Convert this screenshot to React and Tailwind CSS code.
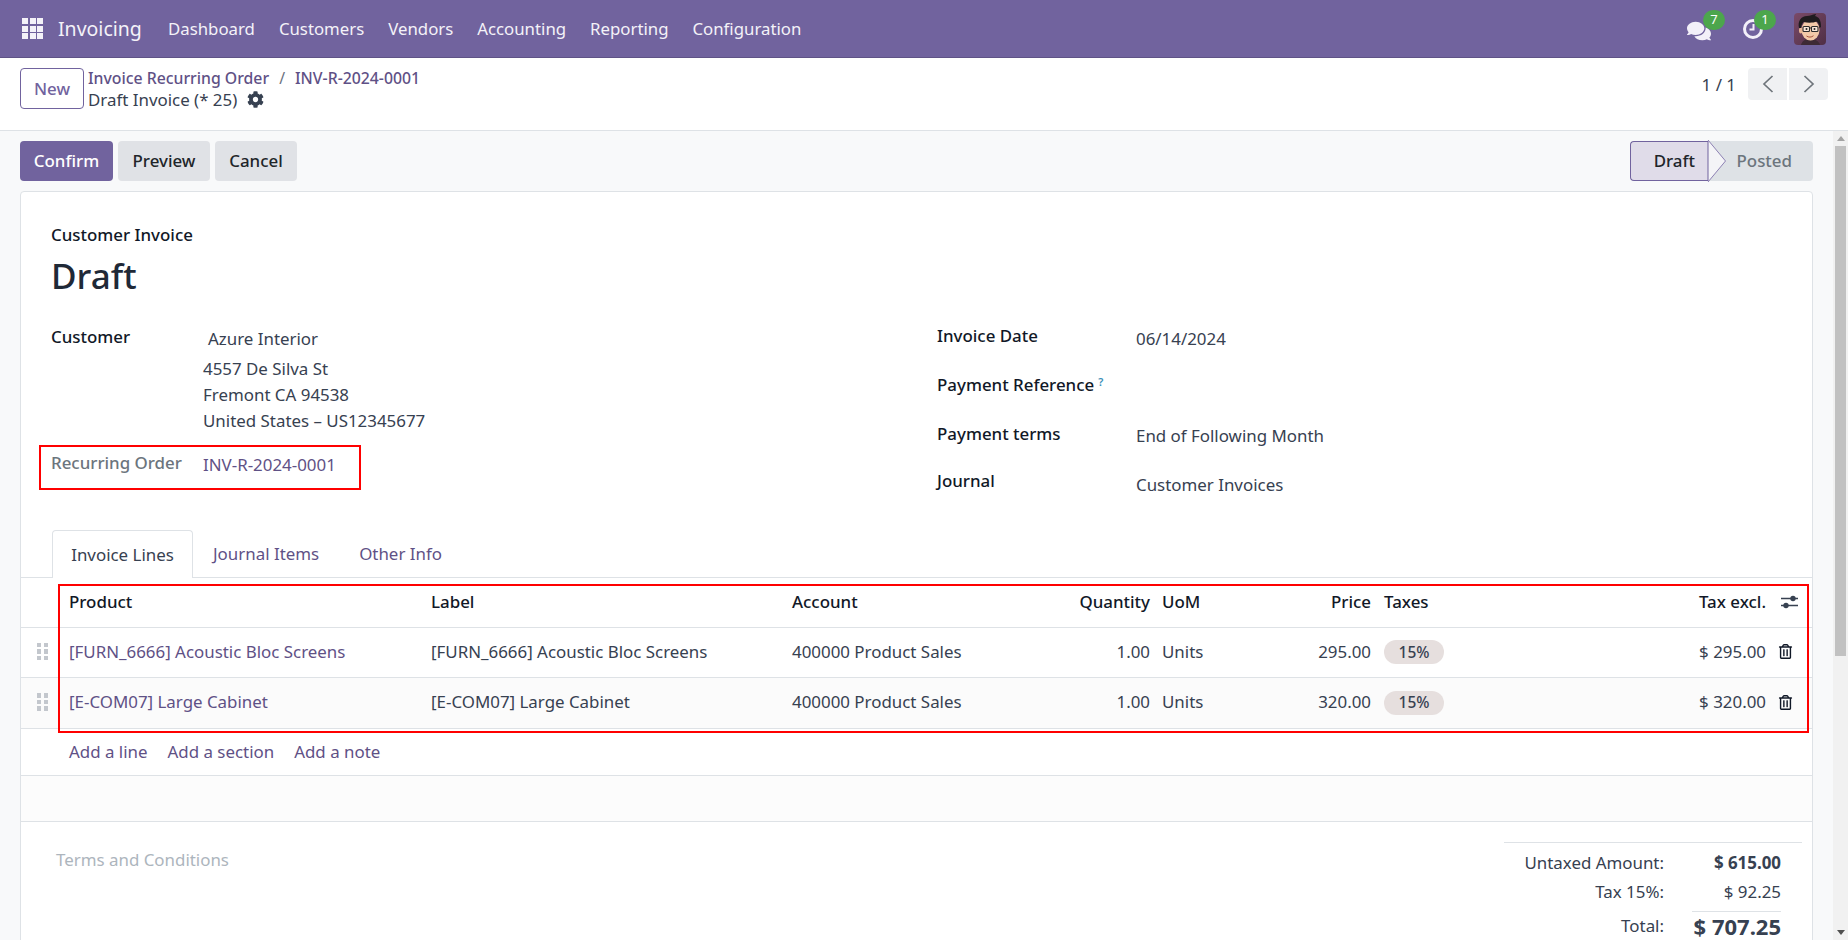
import { FaComments, FaCog, FaRegTrashAlt } from 'react-icons/fa';

const NAV = ['Dashboard', 'Customers', 'Vendors', 'Accounting', 'Reporting', 'Configuration'];

const LINES = [
  { product: '[FURN_6666] Acoustic Bloc Screens', price: '295.00', total: '$ 295.00', bg: 'bg-white', h: 'h-[50px]' },
  { product: '[E-COM07] Large Cabinet', price: '320.00', total: '$ 320.00', bg: 'bg-[#fbfbfb]', h: 'h-[51px]' },
];

const COLS = 'grid grid-cols-[37px_362px_361px_240px_129px_120px_101px_179px_216px_46px] items-center';

function AppGrid() {
  return (
    <div className="grid grid-cols-3 gap-[1.5px] w-[21px] h-[21px]">
      {Array.from({ length: 9 }).map((_, i) => (
        <span key={i} className="bg-[#f4f2f8]" />
      ))}
    </div>
  );
}

function ClockIcon() {
  return (
    <svg width="22" height="22" viewBox="0 0 22 22" fill="none" stroke="#f3f0f9">
      <circle cx="11" cy="11" r="8.5" strokeWidth="3" />
      <path d="M11.5 6v5.5H7.5" strokeWidth="2" />
    </svg>
  );
}

function Avatar() {
  return (
    <svg width="32" height="32" viewBox="0 0 32 32" className="rounded-[4px]">
      <defs>
        <linearGradient id="av" x1="0" y1="0" x2="1" y2="1">
          <stop offset="0" stopColor="#7a4a68" />
          <stop offset="1" stopColor="#4f2f45" />
        </linearGradient>
      </defs>
      <rect width="32" height="32" fill="url(#av)" />
      <path d="M7 32c1-4 4-6 9-6s9 2 10 6z" fill="#3d2a35" />
      <ellipse cx="16.5" cy="17" rx="9" ry="10.5" fill="#f3c9a8" />
      <ellipse cx="6.8" cy="17.5" rx="1.8" ry="3" fill="#eab694" />
      <path d="M5 15C3.500 8 7 3 13 3c3 0 5-1.500 9-2 0 1-1 1.500-1 2 4 1 6 4 6 11l-1.500 1c0-3-1-5.500-3-6.500-3 1.500-9 1.500-13 .5-1.500 2-2.500 4-2.500 6z" fill="#1f1c1f" />
      <rect x="9" y="13.500" width="6.500" height="5" rx="1" fill="#fff" fillOpacity=".55" stroke="#2b2b2b" strokeWidth="1.100" />
      <rect x="17.500" y="13.500" width="6.500" height="5" rx="1" fill="#fff" fillOpacity=".55" stroke="#2b2b2b" strokeWidth="1.100" />
      <path d="M15.500 15h2" stroke="#2b2b2b" strokeWidth="1" />
      <circle cx="12.500" cy="16" r="1" fill="#222" />
      <circle cx="20.500" cy="16" r="1" fill="#222" />
      <path d="M12.500 23c2 1.500 5 1.500 7-.3" stroke="#a8563f" strokeWidth="1" fill="none" />
    </svg>
  );
}

function SliderIcon() {
  return (
    <svg width="19" height="16" viewBox="0 0 19 16" fill="none">
      <path d="M1 4.500h17M1 11.500h17" stroke="#374151" strokeWidth="1.300" />
      <circle cx="13" cy="4.500" r="2.700" fill="#374151" />
      <circle cx="6" cy="11.500" r="2.700" fill="#374151" />
    </svg>
  );
}

function DragHandle() {
  return (
    <div className="grid grid-cols-2 gap-x-[3px] gap-y-[2px] w-[11px] ml-[16px]">
      {Array.from({ length: 6 }).map((_, i) => (
        <span key={i} className="w-[4px] h-[4.500px] bg-[#c3c7cd]" />
      ))}
    </div>
  );
}

function Chevron({ dir }) {
  return (
    <svg width="12" height="20" viewBox="0 0 12 20" fill="none" stroke="#6f757b" strokeWidth="1.700">
      <path d={dir === 'left' ? 'M10.500 2 2 10l8.500 8' : 'M1.500 2 10 10l-8.500 8'} />
    </svg>
  );
}

export default function App() {
  return (
    <div className="h-screen w-full overflow-hidden flex flex-col bg-white text-[16.9px] text-[#374151] font-['Noto_Sans',sans-serif]">
      <header className="h-[58px] shrink-0 bg-[#71639e] border-b border-[#5f5386] flex items-center text-[#f4f2f8]">
        <div className="pl-[22px] pr-[15px]">
          <AppGrid />
        </div>
        <span className="text-[19.5px] w-[110px]">Invoicing</span>
        <nav className="flex gap-[24px] text-[16.8px]">
          {NAV.map((n) => (
            <span key={n}>{n}</span>
          ))}
        </nav>
        <div className="ml-auto flex items-center">
          <div className="relative w-[38px] h-[32px] flex items-center">
            <FaComments size={24} className="text-[#f3f0f9] mt-[5px]" />
            <span className="absolute left-[16px] top-[-3px] w-[22px] h-[20px] rounded-full bg-[#4ca64c] text-white text-[13px] flex items-center justify-center">7</span>
          </div>
          <div className="relative w-[34px] h-[32px] ml-[17px] flex items-center">
            <ClockIcon />
            <span className="absolute left-[12px] top-[-3px] w-[22px] h-[20px] rounded-full bg-[#4ca64c] text-white text-[13px] flex items-center justify-center">1</span>
          </div>
          <div className="ml-[18px] mr-[22px] h-[32px]">
            <Avatar />
          </div>
        </div>
      </header>

      <div className="h-[73px] shrink-0 border-b border-[#dee2e6] flex pt-[10px] pl-[20px] pr-[20px]">
        <button className="w-[64px] h-[41px] rounded-[4px] border border-[#71639e] text-[#71639e] font-medium bg-white">New</button>
        <div className="ml-[4px] leading-[21px]">
          <div className="text-[#5f5186] text-[15.8px] font-medium flex items-center">
            <span>Invoice Recurring Order</span>
            <span className="mx-[10px] text-[#6b7280] font-normal">/</span>
            <span>INV-R-2024-0001</span>
          </div>
          <div className="flex items-center gap-[10px]">
            <span>Draft Invoice (* 25)</span>
            <FaCog size={17} className="text-[#374151]" />
          </div>
        </div>
        <div className="ml-auto flex items-start">
          <span className="mr-[12px] mt-[4px]">1 / 1</span>
          <button className="w-[39px] h-[32px] bg-[#f0f1f3] rounded-l-[4px] flex items-center justify-center">
            <Chevron dir="left" />
          </button>
          <button className="w-[39px] h-[32px] ml-[2px] bg-[#f0f1f3] rounded-r-[4px] flex items-center justify-center">
            <Chevron dir="right" />
          </button>
        </div>
      </div>

      <div className="flex-1 min-h-0 flex bg-[#f8f9fa]">
        <main className="flex-1 min-w-0 pl-[20px] pr-[20px] pt-[10px] overflow-hidden">
          <div className="flex items-center h-[40px]">
            <button className="w-[93px] h-[40px] rounded-[4px] bg-[#71639e] text-white font-medium">Confirm</button>
            <button className="w-[92px] h-[40px] ml-[5px] rounded-[4px] bg-[#e0e2e6] text-[#212529] font-medium">Preview</button>
            <button className="w-[82px] h-[40px] ml-[5px] rounded-[4px] bg-[#e0e2e6] text-[#212529] font-medium">Cancel</button>
            <div className="ml-auto relative flex h-[40px] font-medium">
              <div className="w-[78px] rounded-l-[4px] border border-[#71639e] border-r-0 bg-[#e0dce9] text-[#212529] flex items-center justify-end pr-[13px]">Draft</div>
              <div className="w-[105px] rounded-r-[4px] bg-[#dee2e6] text-[#6c757d] flex items-center justify-end pr-[21px]">Posted</div>
              <svg className="absolute left-[77px] top-[-1px]" width="20" height="42" viewBox="0 0 20 42" fill="none">
                <path d="M1 0 18.500 21 1 42z" fill="#f4f4f7" />
                <path d="M1 0 18.500 21 1 42" stroke="#8d80b3" strokeWidth="1" />
                <path d="M1 1v40" stroke="#71639e" strokeWidth="1" />
              </svg>
            </div>
          </div>

          <section className="mt-[10px] bg-white border border-[#dee2e6] rounded-t-[4px] h-[760px]">
            <div className="pl-[30px] pr-[31px] pt-[31px]">
              <div className="leading-[24px] font-medium text-[#111827]">Customer Invoice</div>
              <div className="mt-[4px] leading-[50px] text-[35px] font-medium text-[#1f2937]">Draft</div>

              <div className="mt-[23px] h-[206px] flex">
                <div className="w-[886px] pt-[1px]">
                  <div className="flex">
                    <div className="w-[152px] leading-[24px] font-medium text-[#111827]">Customer</div>
                    <div className="mt-[2px] pl-[5px] leading-[24px]">Azure Interior</div>
                  </div>
                  <div className="ml-[152px] mt-[5px] leading-[26px]">
                    <div>4557 De Silva St</div>
                    <div>Fremont CA 94538</div>
                    <div>United States – US12345677</div>
                  </div>
                  <div className="relative flex mt-[17px]">
                    <div className="w-[152px] leading-[24px] font-medium text-[#6c757d]">Recurring Order</div>
                    <div className="mt-[2px] leading-[24px] text-[#5f5186]">INV-R-2024-0001</div>
                    <div className="absolute left-[-12px] top-[-6px] w-[322px] h-[45px] border-2 border-[#ff0000] pointer-events-none" />
                  </div>
                </div>
                <div className="flex-1">
                  <div className="flex h-[49px]">
                    <div className="w-[199px] leading-[24px] font-medium text-[#111827]">Invoice Date</div>
                    <div className="mt-[3px] leading-[24px]">06/14/2024</div>
                  </div>
                  <div className="flex h-[49px]">
                    <div className="w-[199px] leading-[24px] font-medium text-[#111827] whitespace-nowrap">
                      Payment Reference
                      <sup className="ml-[4px] text-[11px] text-[#3b8fb8] font-semibold">?</sup>
                    </div>
                  </div>
                  <div className="flex h-[47px]">
                    <div className="w-[199px] leading-[24px] font-medium text-[#111827]">Payment terms</div>
                    <div className="mt-[2px] leading-[24px]">End of Following Month</div>
                  </div>
                  <div className="flex">
                    <div className="w-[199px] leading-[24px] font-medium text-[#111827]">Journal</div>
                    <div className="mt-[4px] leading-[24px]">Customer Invoices</div>
                  </div>
                </div>
              </div>
            </div>

            <div className="h-[48px] border-b border-[#dee2e6] pl-[31px] flex">
              <div className="w-[141px] h-[48px] bg-white border border-b-0 border-[#dee2e6] rounded-t-[4px] flex items-center justify-center">Invoice Lines</div>
              <div className="px-[20px] h-[47px] flex items-center text-[#5f5186]">Journal Items</div>
              <div className="px-[20px] h-[47px] flex items-center text-[#5f5186]">Other Info</div>
            </div>

            <div className="relative">
              <div className={`${COLS} h-[50px] pb-[2px] border-b border-[#dee2e6] font-medium text-[#111827]`}>
                <span />
                <span className="pl-[11px]">Product</span>
                <span className="pl-[11px]">Label</span>
                <span className="pl-[11px]">Account</span>
                <span className="text-right">Quantity</span>
                <span className="pl-[12px]">UoM</span>
                <span className="text-right">Price</span>
                <span className="pl-[13px]">Taxes</span>
                <span className="text-right">Tax excl.</span>
                <span className="pl-[14px]"><SliderIcon /></span>
              </div>
              {LINES.map((l) => (
                <div key={l.product} className={`${COLS} ${l.h} ${l.bg} pb-[2px] border-b border-[#dee2e6]`}>
                  <DragHandle />
                  <span className="pl-[11px] text-[#5f5186]">{l.product}</span>
                  <span className="pl-[11px]">{l.product}</span>
                  <span className="pl-[11px]">400000 Product Sales</span>
                  <span className="text-right">1.00</span>
                  <span className="pl-[12px]">Units</span>
                  <span className="text-right">{l.price}</span>
                  <span className="pl-[13px]">
                    <span className="inline-flex w-[60px] h-[24px] rounded-full bg-[#e6dfde] items-center justify-center text-[15.5px] font-medium">15%</span>
                  </span>
                  <span className="text-right">{l.total}</span>
                  <span className="pl-[12px] text-[#111827]"><FaRegTrashAlt size={15} /></span>
                </div>
              ))}
              <div className="h-[47px] border-b border-[#dee2e6] pl-[48px] flex items-center gap-[20px] text-[#5f5186]">
                <span>Add a line</span>
                <span>Add a section</span>
                <span>Add a note</span>
              </div>
              <div className="absolute left-[37px] top-[6px] w-[1751px] h-[149px] border-2 border-[#ff0000] pointer-events-none" />
            </div>

            <div className="h-[46px] border-b border-[#dee2e6] bg-[#fcfcfc]" />

            <div className="flex justify-between pt-[20px] pr-[10px]">
              <div className="pl-[35px] pt-[6px] leading-[24px] text-[#adb5bd]">Terms and Conditions</div>
              <div className="w-[298px] border-t border-[#dee2e6]">
                <div className="flex mt-[7px] h-[26px] items-center">
                  <span className="w-[160px] text-right">Untaxed Amount:</span>
                  <span className="w-[117px] text-right font-bold">$ 615.00</span>
                </div>
                <div className="flex mt-[3px] h-[26px] items-center">
                  <span className="w-[160px] text-right">Tax 15%:</span>
                  <span className="w-[117px] text-right">$ 92.25</span>
                </div>
                <div className="ml-[188px] w-[89px] mt-[6px] border-t border-[#dee2e6]" />
                <div className="flex h-[28px] items-center">
                  <span className="w-[160px] text-right">Total:</span>
                  <span className="w-[117px] text-right font-bold text-[22px]">$ 707.25</span>
                </div>
              </div>
            </div>
          </section>
        </main>

        <div className="w-[15px] shrink-0 bg-[#f1f1f1] flex flex-col items-center">
          <div className="h-[15px] flex items-center justify-center">
            <span className="w-0 h-0 border-x-[4px] border-x-transparent border-b-[5px] border-b-[#a3a3a3]" />
          </div>
          <div className="w-[11px] h-[510px] bg-[#c1c1c1]" />
          <div className="mt-auto h-[15px] flex items-center justify-center">
            <span className="w-0 h-0 border-x-[4px] border-x-transparent border-t-[5px] border-t-[#505050]" />
          </div>
        </div>
      </div>
    </div>
  );
}
